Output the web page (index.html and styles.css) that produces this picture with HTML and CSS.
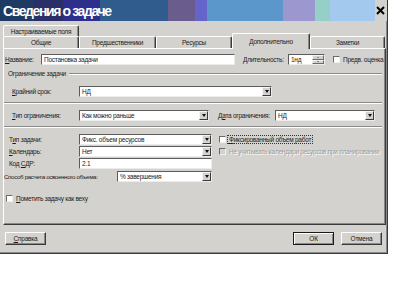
FILE: index.html
```html
<!DOCTYPE html>
<html lang="ru">

<head>
    <meta charset="UTF-8">
    <meta name="viewport" content="width=device-width, initial-scale=1.0">
    <title>Сведения о задаче</title>
    <link rel="stylesheet" href="styles.css">
</head>

<body>
    <div class="dialog">
        <!-- Заголовок окна -->
        <div class="titlebar">
            <span class="title">Сведения о задаче</span>
            <span class="close">
                <svg width="9" height="9" viewBox="0 0 9 9">
                    <path d="M1 1 L8 8 M8 1 L1 8" stroke="#000" stroke-width="2" />
                </svg>
            </span>
        </div>

        <!-- Вкладки -->
        <div class="tabs">
            <div class="tab-row back">
                <div class="tab w-general">Настраиваемые поля</div>
            </div>
            <div class="tab-row front">
                <div class="tab w-general">Общие</div>
                <div class="tab w-pred">Предшественники</div>
                <div class="tab w-res">Ресурсы</div>
                <div class="tab w-adv active">Дополнительно</div>
                <div class="tab w-notes">Заметки</div>
            </div>
        </div>

        <div class="panel">
            <div class="row row-name">
                <span class="label l-name"><u>Н</u>азвание:</span>
                <div class="field f-name">Постановка задачи</div>
                <span class="label l-dur">Длительность:</span>
                <div class="field f-dur">
                    <span class="value">1нд</span>
                    <span class="spin">
                        <span class="spin-btn up"></span>
                        <span class="spin-btn down"></span>
                    </span>
                </div>
                <span class="check"></span>
                <span class="check-label">Предв. оценка</span>
            </div>

            <div class="group-title">
                <span>Ограничение задачи</span>
                <span class="line"></span>
            </div>

            <div class="row row-group deadline">
                <span class="label l-group"><u>К</u>райний срок:</span>
                <div class="field f-deadline"><span class="value">НД</span><span class="arrow"></span></div>
            </div>

            <div class="sep"></div>

            <div class="row row-group">
                <span class="label l-group"><u>Т</u>ип ограничения:</span>
                <div class="field f-ctype"><span class="value">Как можно раньше</span><span class="arrow"></span></div>
                <span class="label l-cdate">Д<u>а</u>та ограничения:</span>
                <div class="field f-cdate"><span class="value">НД</span><span class="arrow"></span></div>
            </div>

            <div class="sep"></div>

            <div class="row row-task first">
                <span class="label l-task">Т<u>и</u>п задачи:</span>
                <div class="field f-task"><span class="value">Фикс. объем ресурсов</span><span class="arrow"></span></div>
                <span class="check"></span>
                <span class="check-label focus"><u>Ф</u>иксированный объем работ</span>
            </div>
            <div class="row row-task">
                <span class="label l-task"><u>К</u>алендарь:</span>
                <div class="field f-task"><span class="value">Нет</span><span class="arrow"></span></div>
                <span class="check disabled"></span>
                <span class="check-label disabled">Не учитывать календари ресурсов при планировании</span>
            </div>
            <div class="row row-task">
                <span class="label l-task">Код <u>С</u>ДР:</span>
                <div class="field f-task"><span class="value">2.1</span></div>
            </div>
            <div class="row-ev">
                <span class="l-ev">Способ расчета освоенного объема:</span>
                <div class="field"><span class="value">% завершения</span><span class="arrow"></span></div>
            </div>

            <div class="row row-mile">
                <span class="check"></span>
                <span class="check-label"><u>П</u>ометить задачу как веху</span>
            </div>
        </div>

        <div class="buttons">
            <div class="btn"><u>С</u>правка</div>
            <div class="spacer"></div>
            <div class="btn default">ОК</div>
            <div class="btn">Отмена</div>
        </div>
    </div>
</body>

</html>
```

FILE: styles.css
```css
* {
    box-sizing: border-box;
}

body {
    margin: 0;
    background: #fff;
    font-family: "Liberation Sans", Arial, sans-serif;
    font-size: 6.5px;
    letter-spacing: -0.25px;
    color: #1b1b1b;
}

u {
    text-decoration: underline;
}

.dialog {
    width: 388px;
    height: 254px;
    background: #d3d2ce;
    border-right: 1px solid #3a3a3a;
    border-bottom: 1px solid #3a3a3a;
    box-shadow: inset -1px -1px 0 #8a8a8a;
    display: flex;
    flex-direction: column;
}

/* Заголовок */
.titlebar {
    height: 21px;
    display: flex;
    align-items: center;
    justify-content: space-between;
    padding: 0 1px 0 3px;
    background: linear-gradient(to right,
            #1e3b63 0 33px,
            #2b2f68 33px 63px,
            #2c2f8b 63px 100px,
            #2f5b8d 100px 168px,
            #6a5d8e 168px 195px,
            #6464cb 195px 207px,
            #5b97cb 207px 283px,
            #9c98cf 283px 315px,
            #95cfc8 315px 330px,
            #a3c9ef 330px 375px,
            #d3d2ce 375px);
}

.title {
    color: #fff;
    font-size: 14px;
    font-weight: bold;
    letter-spacing: -1.4px;
}

.close {
    width: 12px;
    height: 15px;
    display: flex;
    align-items: center;
    justify-content: center;
}

/* Вкладки */
.tabs {
    height: 27px;
    padding: 4px 0 0 3px;
    display: flex;
    flex-direction: column;
}

.tab-row {
    display: flex;
    align-items: flex-end;
}

.tab-row.back {
    height: 11px;
}

.tab-row.front {
    height: 12px;
}

.tab {
    height: 100%;
    display: flex;
    align-items: center;
    justify-content: center;
    border-top: 1px solid #fff;
    border-left: 1px solid #fff;
    border-right: 1px solid #3a3a3a;
    border-radius: 2px 2px 0 0;
    box-shadow: inset -1px 0 0 #8a8a8a;
    background: #d3d2ce;
}

.tab.active {
    height: 16px;
    margin-bottom: -1px;
    position: relative;
    z-index: 1;
}

.w-general { width: 76px; }
.w-pred { width: 77px; }
.w-res { width: 76px; }
.w-adv { width: 78px; }
.w-notes { width: 75px; }

/* Панель */
.panel {
    height: 177px;
    margin: 0 1px 0 3px;
    border: 1px solid;
    border-color: #fff #3a3a3a #3a3a3a #fff;
    box-shadow: inset -1px -1px 0 #8a8a8a;
    padding-top: 5px;
}

.row {
    height: 11px;
    display: flex;
    align-items: center;
}

.label {
    flex: none;
    white-space: nowrap;
}

.row-name { padding-left: 1px; }
.l-name { width: 36px; }
.l-dur { width: 45px; margin-left: 8px; }

.group-title {
    height: 11px;
    margin-top: 3px;
    padding: 0 3px 0 4px;
    display: flex;
    align-items: center;
}

.group-title .line,
.sep {
    height: 2px;
    border-top: 1px solid #8a8a8a;
    border-bottom: 1px solid #fff;
}

.group-title .line {
    flex: 1;
    margin-left: 3px;
}

.sep {
    margin: 5px 3px 0 0;
}

.row-group { margin-top: 6px; padding-left: 8px; }
.row-group.deadline { margin-top: 7px; }
.l-group { width: 67px; }
.l-cdate { width: 57px; margin-left: 9px; }

.row-task { margin-top: 1px; padding-left: 5px; }
.row-task.first { margin-top: 6px; }
.l-task { width: 70px; }

/* Строка со способом расчета: фиксированные колонки */
.row-ev {
    height: 11px;
    margin-top: 2px;
    display: grid;
    grid-template-columns: 113px 95px;
    align-items: center;
}

.l-ev {
    white-space: nowrap;
    font-size: 6.2px;
    letter-spacing: -0.35px;
}

.row-mile { margin-top: 11px; padding-left: 2px; }

/* Поля ввода */
.field {
    flex: none;
    height: 11px;
    background: #fff;
    border: 1px solid;
    border-color: #5c5c5c #ececec #ececec #5c5c5c;
    display: flex;
    align-items: center;
    padding-left: 2px;
    white-space: nowrap;
}

.field .value {
    flex: 1;
}

.f-name { width: 194px; }
.f-dur { width: 37px; }
.f-deadline { width: 193px; }
.f-ctype { width: 130px; }
.f-cdate { width: 100px; }
.f-task { width: 133px; }

.arrow {
    width: 9px;
    height: 9px;
    background: #d3d2ce;
    border: 1px solid;
    border-color: #f4f4f4 #3a3a3a #3a3a3a #f4f4f4;
    display: flex;
    align-items: center;
    justify-content: center;
}

.arrow::after {
    content: "";
    border-top: 3px solid #111;
    border-left: 2px solid transparent;
    border-right: 2px solid transparent;
}

.spin {
    width: 12px;
    height: 9px;
    display: flex;
    flex-direction: column;
}

.spin-btn {
    flex: 1;
    background: #d3d2ce;
    border: 1px solid;
    border-color: #f4f4f4 #6a6a6a #6a6a6a #f4f4f4;
    display: flex;
    align-items: center;
    justify-content: center;
}

.spin-btn.up::after {
    content: "";
    border-bottom: 1px solid #333;
    border-left: 1px solid transparent;
    border-right: 1px solid transparent;
}

.spin-btn.down::after {
    content: "";
    border-top: 1px solid #333;
    border-left: 1px solid transparent;
    border-right: 1px solid transparent;
}

/* Флажки */
.check {
    width: 7px;
    height: 7px;
    background: #fff;
    border: 1px solid;
    border-color: #6a6a6a #f0f0f0 #f0f0f0 #6a6a6a;
    flex-shrink: 0;
}

.row-name .check { margin-left: 8px; }
.row-task .check { margin-left: 7px; }

.check.disabled {
    background: #d3d2ce;
}

.check-label {
    margin-left: 3px;
    white-space: nowrap;
}

.check-label.focus {
    margin-left: 2px;
    padding: 0 1px;
    outline: 1px dotted #333;
}

.check-label.disabled {
    color: #9c9c9c;
    text-shadow: 1px 1px 0 #fff;
}

/* Кнопки */
.buttons {
    flex: 1;
    display: flex;
    gap: 7px;
    padding: 7px 5px 0 5px;
}

.spacer {
    flex: 1;
}

.btn {
    width: 41px;
    height: 13px;
    display: flex;
    align-items: center;
    justify-content: center;
    background: #d3d2ce;
    border: 1px solid;
    border-color: #fff #3a3a3a #3a3a3a #fff;
    box-shadow: inset -1px -1px 0 #8a8a8a;
}

.btn.default {
    border-color: #1a1a1a;
    box-shadow: inset 1px 1px 0 #fff, inset -1px -1px 0 #8a8a8a;
}
```
